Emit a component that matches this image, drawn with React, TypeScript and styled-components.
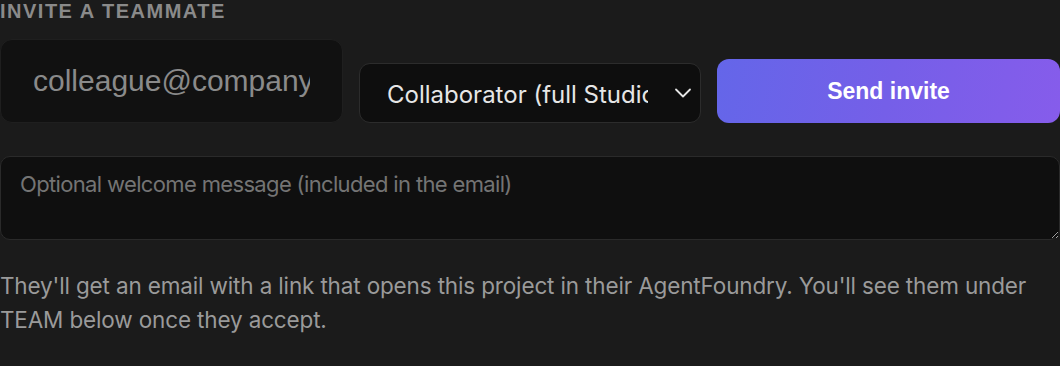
import React from "react";
import styled, { createGlobalStyle } from "styled-components";

const GlobalStyle = createGlobalStyle`
  html, body {
    margin: 0;
    padding: 0;
    background: #1b1b1b;
  }
  * { box-sizing: border-box; }
`;

const Panel = styled.div`
  width: 1060px;
  height: 366px;
  background: #1b1b1b;
  font-family: Inter, "Noto Sans", sans-serif;
  overflow: hidden;
`;

const Heading = styled.div`
  font-family: "Liberation Sans", Arial, sans-serif;
  font-size: 20px;
  font-weight: 700;
  letter-spacing: 1.5px;
  color: #8a8a8a;
  line-height: 22px;
  margin-top: 0;
`;

const Row = styled.div`
  display: flex;
  align-items: flex-end;
  gap: 16px;
  margin-top: 17px;
`;

const EmailInput = styled.input`
  width: 343px;
  height: 84px;
  padding: 0 32px;
  background: #111111;
  border: 1px solid #1f1f1f;
  border-radius: 12px;
  font-family: "Liberation Sans", Arial, sans-serif;
  font-size: 30px;
  color: #ddd;
  outline: none;
  &::placeholder { color: #8a8a8a; }
`;

const SelectWrap = styled.div`
  position: relative;
  width: 342px;
  height: 60px;
`;

const Select = styled.select`
  appearance: none;
  width: 100%;
  height: 100%;
  padding: 2px 52px 0 27px;
  background: #0e0e0e;
  border: 1px solid #2c2c2c;
  border-radius: 11px;
  font-family: Inter, sans-serif;
  font-size: 24px;
  color: #e6e6e6;
  outline: none;
`;

const Chevron = styled.svg`
  position: absolute;
  right: 9px;
  top: 24px;
  pointer-events: none;
`;

const SendButton = styled.button`
  flex: 1;
  height: 64px;
  border: none;
  border-radius: 12px;
  background: linear-gradient(100deg, #6466e9 0%, #755fe8 50%, #865ceb 100%);
  color: #fff;
  font-family: "Liberation Sans", Arial, sans-serif;
  font-weight: 700;
  font-size: 23px;
  cursor: pointer;
`;

const Message = styled.textarea`
  display: block;
  width: 1060px;
  height: 84px;
  margin-top: 33px;
  padding: 13px 19px;
  background: #0f0f0f;
  border: 1px solid #2a2a2a;
  border-radius: 10px;
  font-family: Inter, sans-serif;
  font-size: 22px;
  line-height: 28px;
  letter-spacing: -0.65px;
  color: #ddd;
  outline: none;
  resize: vertical;
  &::placeholder { color: #747474; }
`;

const Help = styled.p`
  margin: 29px 0 0;
  font-family: Inter, sans-serif;
  font-size: 22.5px;
  line-height: 34px;
  letter-spacing: -0.15px;
  color: #9a9a9a;
`;

export default function App() {
  return (
    <Panel>
      <GlobalStyle />
      <Heading>INVITE A TEAMMATE</Heading>
      <Row>
        <EmailInput type="email" placeholder="colleague@company.com" />
        <SelectWrap>
          <Select defaultValue="collab">
            <option value="collab">Collaborator (full Studio access)</option>
            <option value="viewer">Viewer</option>
          </Select>
          <Chevron width="18" height="12" viewBox="0 0 18 12" fill="none">
            <path d="M2 2.5l7 7 7-7" stroke="#e6e6e6" strokeWidth="1.8" strokeLinecap="round" strokeLinejoin="round" />
          </Chevron>
        </SelectWrap>
        <SendButton>Send invite</SendButton>
      </Row>
      <Message placeholder="Optional welcome message (included in the email)" />
      <Help>
        They'll get an email with a link that opens this project in their AgentFoundry. You'll see them under TEAM below once they accept.
      </Help>
    </Panel>
  );
}
